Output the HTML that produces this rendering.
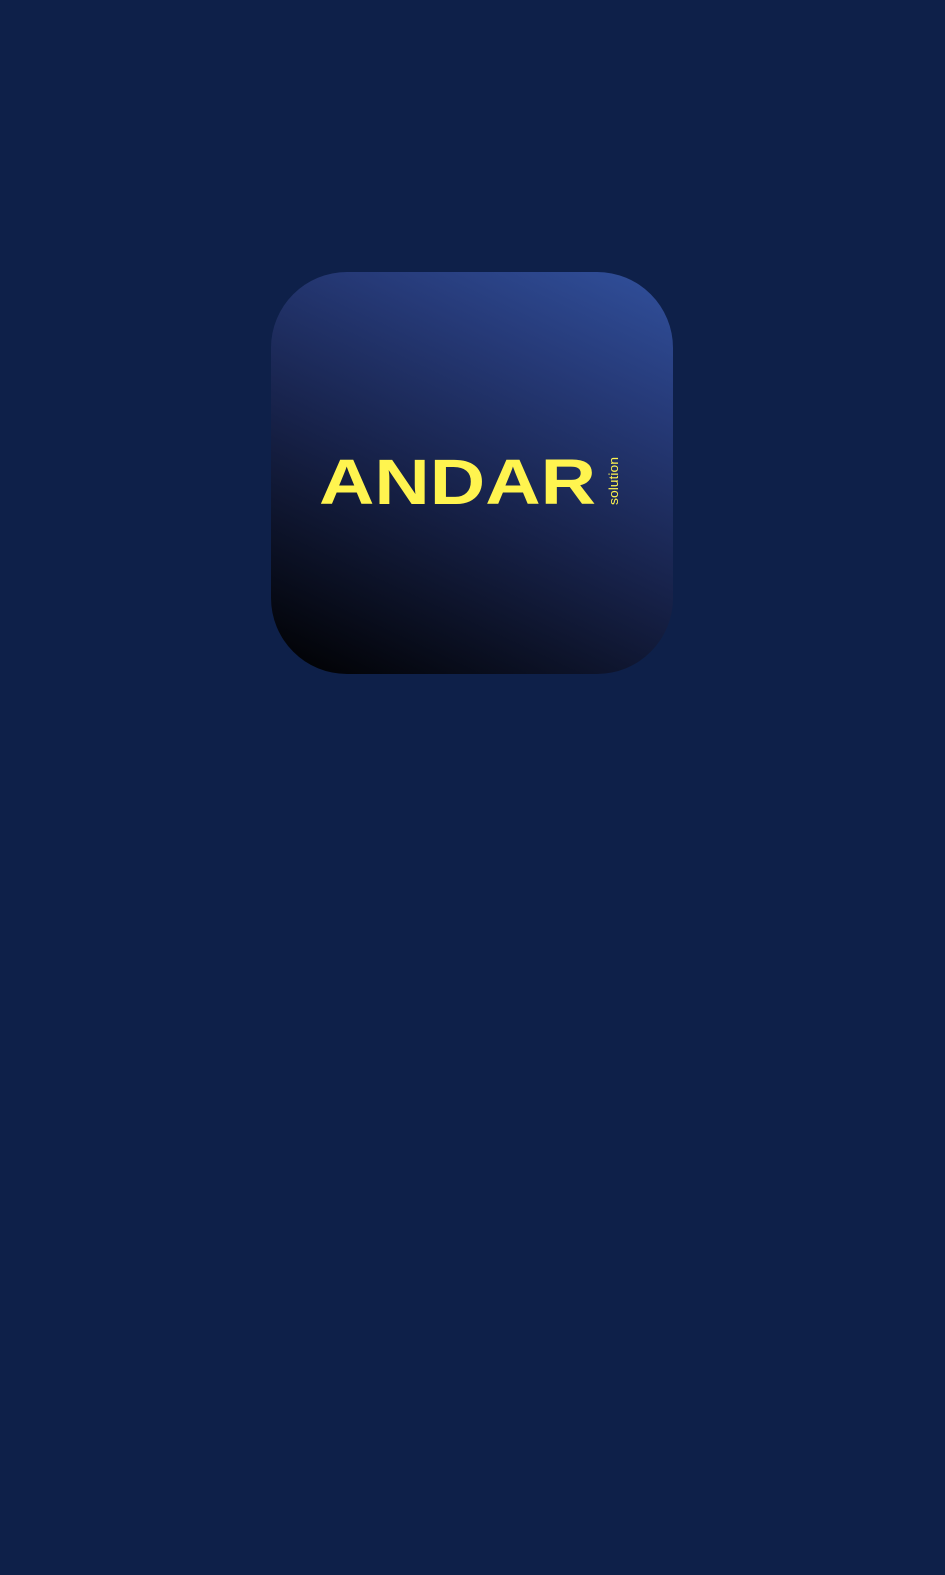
<!DOCTYPE html>
<html><head><meta charset="utf-8"><style>
html,body{margin:0;padding:0;width:945px;height:1575px;background:#0e2049;overflow:hidden}
.box{position:absolute;left:271px;top:272px;width:402px;height:402px;border-radius:76px;
background:linear-gradient(205deg,#31509c 0%,#263a78 25%,#17224a 55%,#000 100%);}
svg{position:absolute;left:0;top:0}
</style></head><body>
<div class="box"></div>
<svg width="945" height="1575">
<text x="319" y="504" font-family="Liberation Sans, sans-serif" font-weight="bold" font-size="64" fill="#fff44f" textLength="277" lengthAdjust="spacingAndGlyphs">ANDAR</text>
<text transform="translate(618,505) rotate(-90)" font-family="Liberation Sans, sans-serif" font-size="13" fill="#fff44f" textLength="48" lengthAdjust="spacingAndGlyphs">solution</text>
</svg>
</body></html>
